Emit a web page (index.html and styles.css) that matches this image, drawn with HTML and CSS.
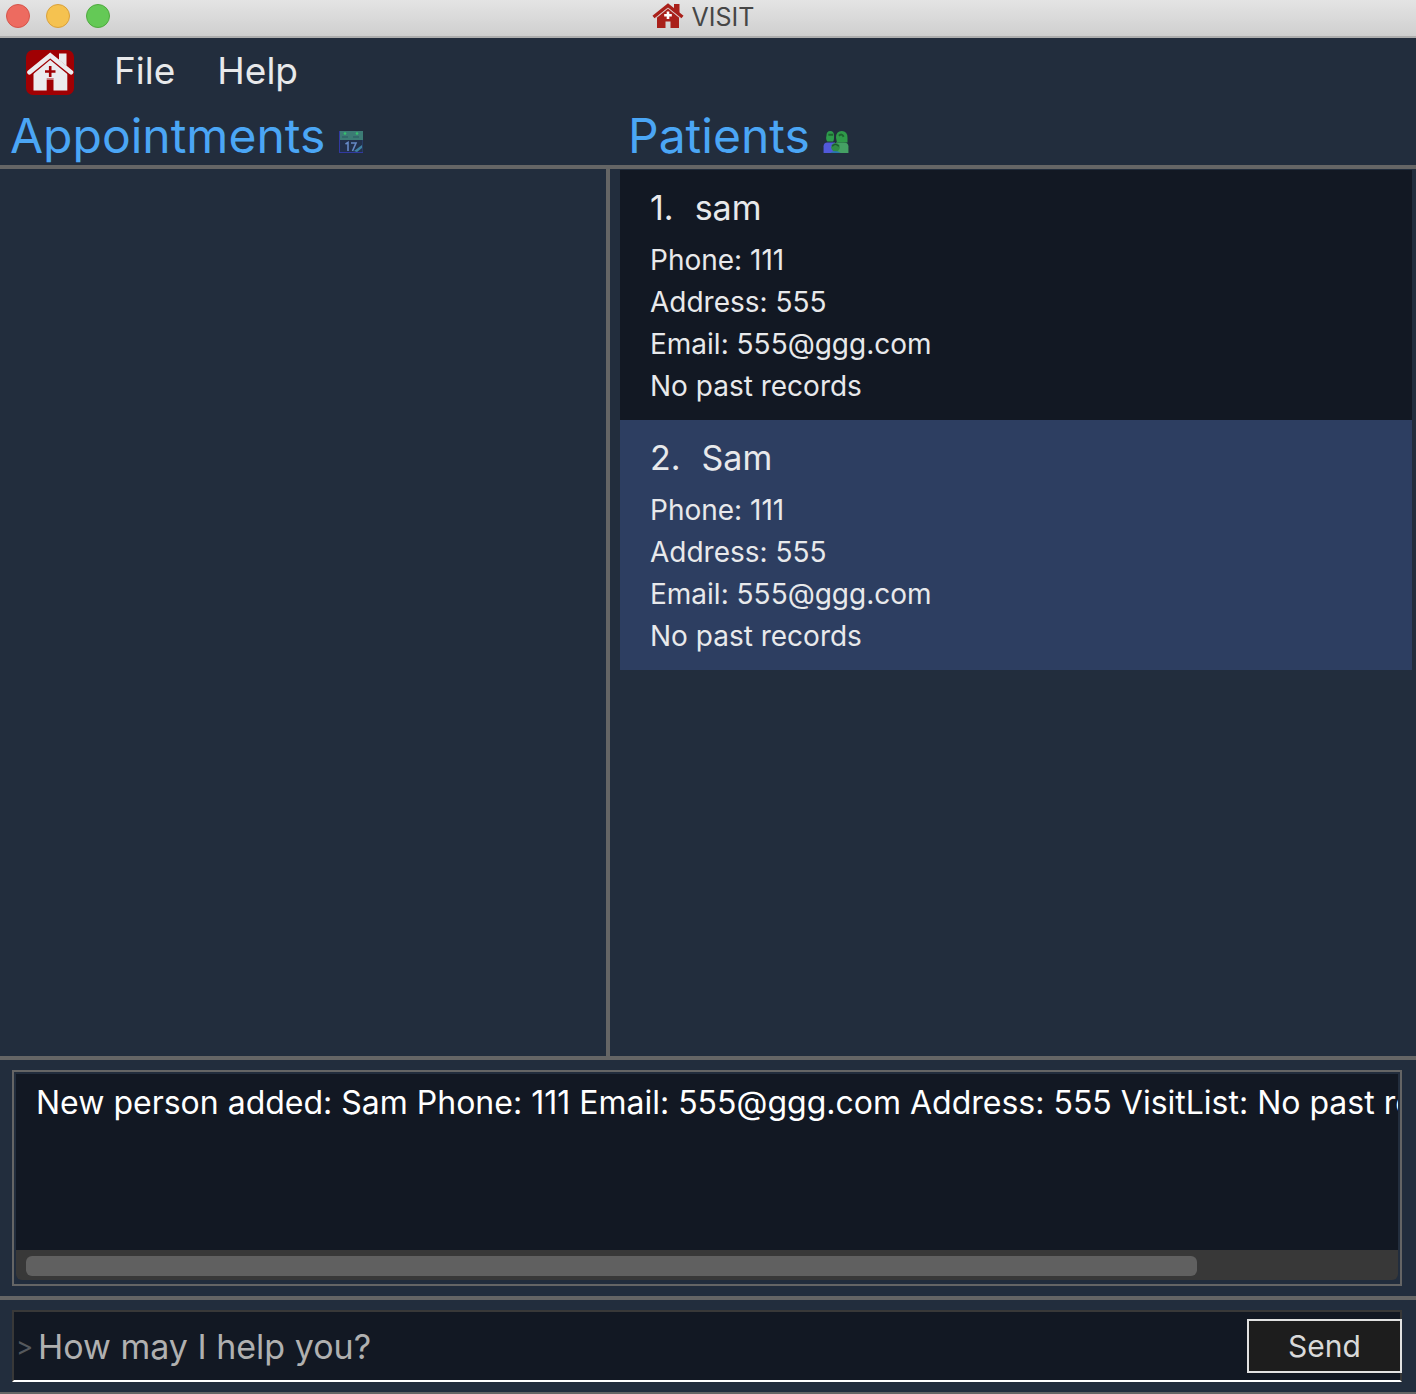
FILE: index.html
```html
<!DOCTYPE html>
<html lang="en">
<head>
<meta charset="utf-8">
<meta name="viewport" content="width=device-width, initial-scale=1">
<title>VISIT</title>
<link rel="stylesheet" href="styles.css">
</head>
<body>
<div class="window">
  <header class="titlebar">
    <div class="lights">
      <button class="light close" type="button" aria-label="Close"></button>
      <button class="light minimize" type="button" aria-label="Minimize"></button>
      <button class="light maximize" type="button" aria-label="Maximize"></button>
    </div>
    <h1 class="title">
      <svg class="title-icon" viewBox="0 0 32 26" aria-hidden="true">
        <path d="M1.500 14 16 2.500 30.500 14" fill="none" stroke="#a9201a" stroke-width="3.400"/>
        <path d="M22 1h5.500v9L22 6z" fill="#a9201a"/>
        <path d="M5 14.500 16 5.500 27 14.500V25H18.500V18.500H13.500V25H5z" fill="#a9201a"/>
        <path d="M3.500 15.200 16 5.200 28.500 15.200" fill="none" stroke="#d9b5b3" stroke-width=".7"/>
        <path d="M16 8.500v7.500M12.200 12.200h7.600" stroke="#fff" stroke-width="2.600"/>
      </svg>
      <span>VISIT</span>
    </h1>
  </header>

  <nav class="menubar" aria-label="Main">
    <svg class="logo" viewBox="0 0 48 45" aria-hidden="true">
      <rect width="48" height="45" rx="7" fill="#a00003"/>
      <path d="M33 3.500h7.500V16L33 10z" fill="#ebebee"/>
      <path d="M7.500 22.500 24.200 9 41.300 22.500V40.500H27.500V29.500H20.700V40.500H7.500z" fill="#ebebee"/>
      <path d="M5.500 24.300 24.200 8.800 43 24.300" fill="none" stroke="#a00003" stroke-width="1.600"/>
      <path d="M3.500 22.300 24.200 5.500 45 22.300" fill="none" stroke="#ebebee" stroke-width="4.600" stroke-linecap="round"/>
      <path d="M24.200 16v11M19 21.500h10.500" stroke="#a00003" stroke-width="2.600"/>
      <path d="M20.700 28.700h7" stroke="#c96a70" stroke-width="1"/>
    </svg>
    <button class="menu" type="button">File</button>
    <button class="menu" type="button">Help</button>
  </nav>

  <main class="panels">
    <section class="panel appointments">
      <h2 class="heading">Appointments
        <svg class="heading-icon calendar" viewBox="0 0 24 22" aria-hidden="true">
          <rect width="24" height="22" fill="#273b63"/>
          <rect x="1" y="9" width="22" height="12" fill="#22304b"/>
          <rect width="24" height="9" fill="#3c7b75"/>
          <path d="M.5 0v22M0 21.500h24" stroke="#3139a0"/>
          <path d="M3 6h6M14 6h6" stroke="#2b5963"/>
          <circle cx="6" cy="2.500" r="1.300" fill="#36c26e"/>
          <circle cx="18" cy="2.500" r="1.300" fill="#36c26e"/>
          <path d="M6.500 13 9 11.500V20M12 12h5l-3.500 8" fill="none" stroke="#6689c6" stroke-width="1.600"/>
          <path d="M15 20l8-6v3l-5 4z" fill="#3f83a4"/>
        </svg>
      </h2>
      <div class="list"></div>
    </section>
    <section class="panel patients">
      <h2 class="heading">Patients
        <svg class="heading-icon people" viewBox="0 0 26 23" aria-hidden="true">
          <path d="M0 23v-7q0-4 4-4h8v11z" fill="#5159da"/>
          <path d="M13 23V12h8q5 0 5 4v7z" fill="#45a064"/>
          <path d="M3 5q0-5 4-5t4 5-1 6H4q-2-2-1-6z" fill="#2d9b4b"/>
          <path d="M13 7q0-7 6-7t6 7v5H14z" fill="#2f9b49"/>
          <path d="M5 4h5M16 5q3-3 5 1" fill="none" stroke="#1d632f" stroke-width="2"/>
          <circle cx="12.500" cy="17" r="4.500" fill="#318c45"/>
          <path d="M9 16q3-4 7 0" fill="none" stroke="#1c5930" stroke-width="1.500"/>
          <path d="M7 23q5-4 11 0z" fill="#2876a8"/>
        </svg>
      </h2>
      <div class="list">
        <article class="card">
          <h3 class="name"><span>1.</span><span>sam</span></h3>
          <p>Phone: 111</p>
          <p>Address: 555</p>
          <p>Email: 555@ggg.com</p>
          <p>No past records</p>
        </article>
        <article class="card selected">
          <h3 class="name"><span>2.</span><span>Sam</span></h3>
          <p>Phone: 111</p>
          <p>Address: 555</p>
          <p>Email: 555@ggg.com</p>
          <p>No past records</p>
        </article>
      </div>
    </section>
  </main>

  <section class="result">
    <div class="result-frame">
      <textarea class="result-text" readonly wrap="off" aria-label="Result">New person added: Sam Phone: 111 Email: 555@ggg.com Address: 555 VisitList: No past records</textarea>
      <div class="track"><div class="thumb"></div></div>
    </div>
  </section>

  <form class="command">
    <div class="command-box">
      <label class="prompt" for="command">&gt;</label>
      <input class="command-input" id="command" type="text" placeholder="How may I help you?">
      <button class="send" type="button">Send</button>
    </div>
  </form>
</div>
</body>
</html>
```
FILE: styles.css
```css
* {
  box-sizing: border-box;
}

body,
h1,
h2,
h3,
p {
  margin: 0;
  font-weight: 400;
}

body {
  background: #222d3d;
  color: #e8e9eb;
  font-family: Inter, "Liberation Sans", sans-serif;
}

button,
input,
textarea {
  margin: 0;
  padding: 0;
  border: 0;
  border-radius: 0;
  outline: 0;
  font-family: inherit;
}

.window {
  display: flex;
  flex-direction: column;
  min-height: 100vh;
}

.titlebar {
  display: grid;
  grid-template-columns: 1fr auto 1fr;
  height: 38px;
  padding: 0 16px 0 6px;
  border-bottom: 2px solid #adadad;
  background: linear-gradient(#e4e4e4, #cfcfcf);
}

.lights {
  display: flex;
  gap: 16px;
  padding-top: 4px;
}

.light {
  width: 24px;
  height: 24px;
  border: 1px solid;
  border-radius: 50%;
}

.close {
  border-color: #d5554b;
  background: #ed6b60;
}

.minimize {
  border-color: #d9a13c;
  background: #f5c250;
}

.maximize {
  border-color: #4fa93f;
  background: #64c956;
}

.title {
  display: flex;
  gap: 8px;
  color: #464646;
  font-size: 25px;
  line-height: 34px;
}

.title-icon {
  width: 32px;
  height: 26px;
  margin-top: 3px;
}

.menubar {
  display: flex;
  align-items: center;
  height: 68px;
  padding: 0 26px;
}

.logo {
  width: 48px;
  height: 45px;
  margin-right: 19px;
}

.menu {
  padding: 0 21px 2px;
  background: none;
  color: #e8e9eb;
  font-size: 37px;
  line-height: 48px;
}

.panels {
  display: grid;
  flex: 1;
  grid-template-columns: 76fr 101fr;
  border-bottom: 4px solid #656565;
}

.panel {
  display: flex;
  flex-direction: column;
}

.heading {
  height: 63px;
  padding-left: 10px;
  border-bottom: 4px solid #656565;
  color: #4ba6f5;
  font-size: 48px;
  line-height: 60px;
  white-space: nowrap;
}

.patients .heading {
  padding-left: 20px;
}

.heading-icon {
  height: 22px;
}

.calendar {
  width: 24px;
}

.people {
  width: 26px;
}

.list {
  flex: 1;
}

.appointments .list {
  border-right: 2px solid #656565;
}

.patients .list {
  padding: 1px 4px 0 10px;
  border-left: 2px solid #656565;
}

.card {
  height: 250px;
  padding: 14px 30px;
  background: #121823;
}

.selected {
  background: #2d3e61;
}

.name {
  display: flex;
  gap: 21px;
  margin-bottom: 7px;
  font-size: 34px;
  line-height: 48px;
}

.card p {
  font-size: 28px;
  line-height: 42px;
}

.result {
  padding: 10px 14px 10px 12px;
  border-bottom: 4px solid #656565;
}

.result-frame {
  padding: 2px 2px 4px;
  border: 2px solid #656565;
}

.result-text {
  display: block;
  width: 100%;
  height: 176px;
  padding: 9px 20px;
  overflow: hidden;
  background: #121823;
  color: #fff;
  font-size: 32px;
  line-height: 40px;
  resize: none;
}

.track {
  padding: 6px 10px 4px;
  border-radius: 0 0 6px 6px;
  background: #383838;
}

.thumb {
  width: 86%;
  height: 20px;
  border-radius: 6px;
  background: #606060;
}

.command {
  padding: 10px 14px 10px 12px;
  border-bottom: 2px solid #656565;
}

.command-box {
  display: flex;
  align-items: center;
  height: 72px;
  border: 2px solid #383838;
  border-bottom-color: #fff;
  background: #121823;
}

.prompt {
  width: 24px;
  padding-left: 2px;
  color: #55585d;
  font-size: 26px;
}

.command-input {
  flex: 1;
  min-width: 0;
  height: 60px;
  background: none;
  color: #fff;
  font-size: 34px;
}

.command-input::placeholder {
  color: #b0b0b0;
  opacity: 1;
}

.send {
  width: 155px;
  height: 54px;
  margin-right: -2px;
  border: 2px solid #e2e2e2;
  background: #1d1d1d;
  color: #d9d9d9;
  font-size: 30px;
}
```
